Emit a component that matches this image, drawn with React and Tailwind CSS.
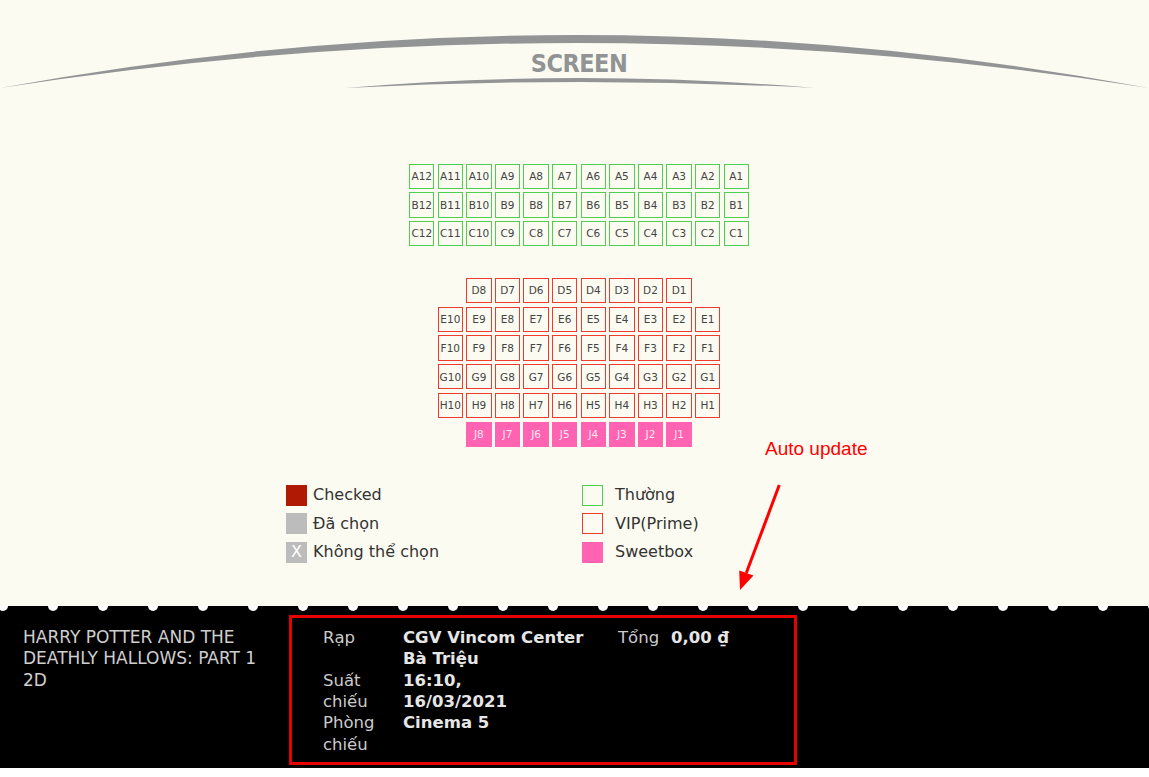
import React from 'react';

const rowsAC = ['A', 'B', 'C'];
const rowsEH = ['E', 'F', 'G', 'H'];
const nums = (n) => Array.from({ length: n }, (_, i) => n - i);

const Seat = ({ label, kind }) => {
  const styles = {
    normal: 'border-[1.5px] border-[#4fcf4f] text-[#444]',
    vip: 'border-[1.5px] border-[#ee3b2e] text-[#444]',
    sweet: 'bg-[#ff63b1] text-[#ffe6f3]',
  };
  return (
    <div
      className={`w-[25.3px] h-[25.3px] shrink-0 flex items-center justify-center text-[10.5px] leading-none ${styles[kind]}`}
    >
      {label}
    </div>
  );
};

const SeatRow = ({ row, count, kind }) => (
  <div className="flex gap-[3.3px]">
    {nums(count).map((n) => (
      <Seat key={n} label={`${row}${n}`} kind={kind} />
    ))}
  </div>
);

const Legend = ({ box, label }) => (
  <div className="flex items-center h-[21px]">
    {box}
    <span className="ml-[6px] text-[16px] text-[#333]">{label}</span>
  </div>
);

const App = () => {
  return (
    <div className="relative w-[1149px] font-['DejaVu_Sans',Verdana,sans-serif]">
      {/* Screen + seat map */}
      <section className="bg-[#fbfbf1]">
        <div className="relative h-[88px]">
          <svg className="absolute inset-0" width="1149" height="88" viewBox="0 0 1149 88">
            <path d="M0 88 Q578 -18 1149 88 Q578 -2 0 88 Z" fill="#939496" />
            <path d="M345 88 Q580 68 815 88 Q580 76 345 88 Z" fill="#939496" />
          </svg>
          <div className="relative pt-[51px] pl-[9px] text-center text-[25px] font-bold leading-none tracking-[-0.5px] text-[#929395] font-['DejaVu_Sans_Condensed','DejaVu_Sans',sans-serif] [font-stretch:condensed]">
            SCREEN
          </div>
        </div>

        <div className="flex flex-col items-center pl-[9px] pt-[76px]">
          <div className="flex flex-col gap-[3.1px]">
            {rowsAC.map((r) => (
              <SeatRow key={r} row={r} count={12} kind="normal" />
            ))}
          </div>

          <div className="mt-[32px] flex flex-col items-center gap-[3.4px]">
            <SeatRow row="D" count={8} kind="vip" />
            {rowsEH.map((r) => (
              <SeatRow key={r} row={r} count={10} kind="vip" />
            ))}
            <SeatRow row="J" count={8} kind="sweet" />
          </div>

          <div className="mt-[38px] pb-[43px] grid grid-cols-[296px_290px] -ml-[9px] pl-[9px]">
            <div className="flex flex-col gap-[7.5px]">
              <Legend box={<div className="w-[21px] h-[21px] bg-[#b01a04]" />} label="Checked" />
              <Legend box={<div className="w-[21px] h-[21px] bg-[#bcbcbc]" />} label="Đã chọn" />
              <Legend
                box={
                  <div className="w-[21px] h-[21px] bg-[#bcbcbc] flex items-center justify-center text-white text-[16px]">
                    X
                  </div>
                }
                label="Không thể chọn"
              />
            </div>
            <div className="flex flex-col gap-[7.5px]">
              <Legend box={<div className="w-[21px] h-[21px] border-[1.5px] border-[#4fcf4f] mr-[6px]" />} label="Thường" />
              <Legend box={<div className="w-[21px] h-[21px] border-[1.5px] border-[#ee3b2e] mr-[6px]" />} label="VIP(Prime)" />
              <Legend box={<div className="w-[21px] h-[21px] bg-[#ff63b1] mr-[6px]" />} label="Sweetbox" />
            </div>
          </div>
        </div>
      </section>

      {/* Annotation */}
      <div className="absolute left-[765px] top-[439px] text-[19px] leading-none text-[#ff0000] font-['Liberation_Sans',Arial,sans-serif]">
        Auto update
      </div>
      <svg className="absolute left-[730px] top-[480px]" width="60" height="115" viewBox="0 0 60 115">
        <line x1="49.3" y1="5" x2="16.3" y2="93" stroke="#ff0000" strokeWidth="3" />
        <polygon points="10,110 23.5,95.6 9.2,90.4" fill="#ff0000" />
      </svg>

      {/* Ticket bar */}
      <footer className="bg-black">
        <div className="flex h-[5px] overflow-hidden">
          {Array.from({ length: 24 }).map((_, i) => (
            <div
              key={i}
              className={`w-[10px] h-[10px] shrink-0 rounded-full bg-white -mt-[5px] ${i === 0 ? 'ml-[-2px]' : 'ml-[40px]'}`}
            />
          ))}
        </div>
        <div className="flex pt-[4px] pb-[3px] text-[16.5px] leading-[21.4px]">
          <div className="w-[289px] pl-[23px] pr-[20px] pt-[12px] text-[17px] text-[#cfcfcf]">
            <div>HARRY POTTER AND THE DEATHLY HALLOWS: PART 1</div>
            <div>2D</div>
          </div>
          <div className="w-[508px] h-[150px] border-[3px] border-[#e60000] pl-[31px] pt-[9px] flex">
            <div className="grid grid-cols-[80px_215px] content-start">
              <div className="text-[#cccccc] pr-[20px]">Rạp</div>
              <div className="font-bold text-[#e6e6e6]">
                CGV Vincom Center
                <br />
                Bà Triệu
              </div>
              <div className="text-[#cccccc] pr-[20px]">Suất chiếu</div>
              <div className="font-bold text-[#e6e6e6]">
                16:10,
                <br />
                16/03/2021
              </div>
              <div className="text-[#cccccc] pr-[20px]">Phòng chiếu</div>
              <div className="font-bold text-[#e6e6e6]">Cinema 5</div>
            </div>
            <div className="text-[#cccccc]">Tổng</div>
            <div className="ml-[12px] font-bold text-[#e6e6e6]">0,00 ₫</div>
          </div>
        </div>
      </footer>
    </div>
  );
};

export default App;
